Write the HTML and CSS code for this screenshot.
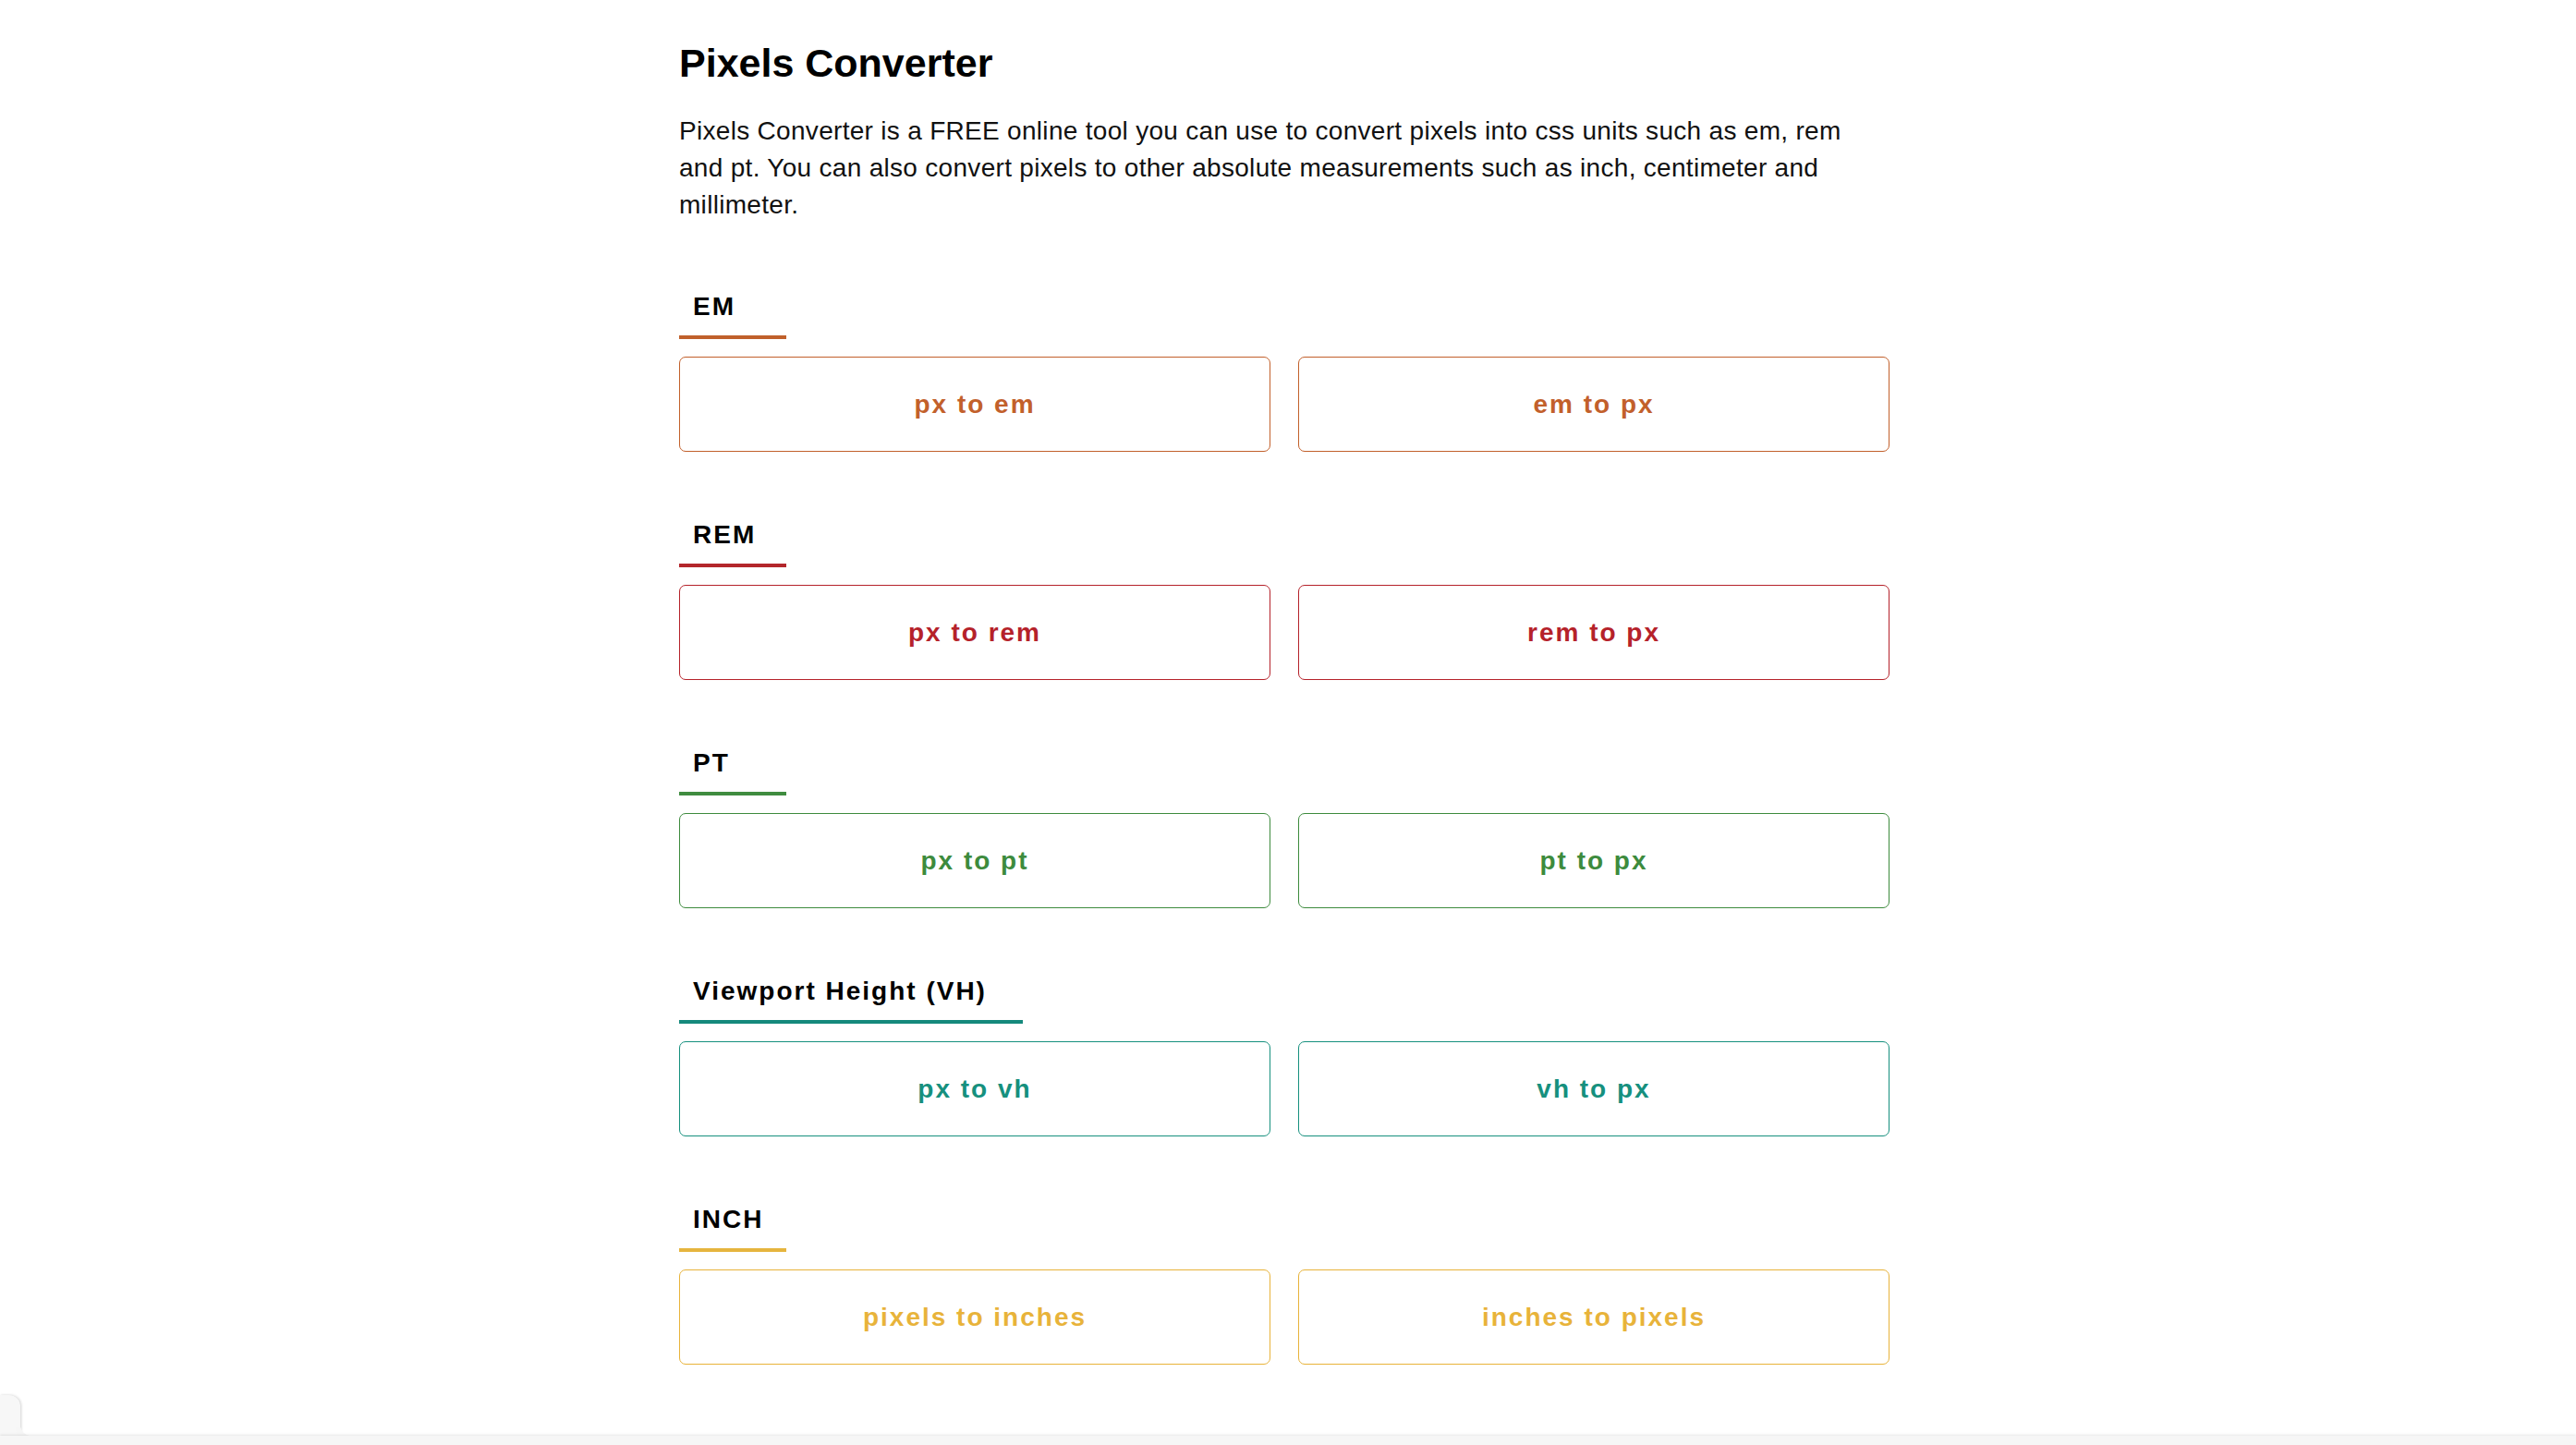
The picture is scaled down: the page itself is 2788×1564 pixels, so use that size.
FILE: index.html
```html
<!DOCTYPE html>
<html lang="en">
<head>
<meta charset="utf-8">
<title>Pixels Converter</title>
<link rel="stylesheet" href="styles.css">
</head>
<body>
<main class="container">
  <h1 class="title">Pixels Converter</h1>
  <p class="intro">Pixels Converter is a FREE online tool you can use to convert pixels into css units such as em, rem and pt. You can also convert pixels to other absolute measurements such as inch, centimeter and millimeter.</p>

  <section class="group group-em">
    <h2 class="group-title">EM</h2>
    <div class="links">
      <a class="link" href="#">px to em</a>
      <a class="link" href="#">em to px</a>
    </div>
  </section>

  <section class="group group-rem">
    <h2 class="group-title">REM</h2>
    <div class="links">
      <a class="link" href="#">px to rem</a>
      <a class="link" href="#">rem to px</a>
    </div>
  </section>

  <section class="group group-pt">
    <h2 class="group-title">PT</h2>
    <div class="links">
      <a class="link" href="#">px to pt</a>
      <a class="link" href="#">pt to px</a>
    </div>
  </section>

  <section class="group group-vh">
    <h2 class="group-title group-title-wide">Viewport Height (VH)</h2>
    <div class="links">
      <a class="link" href="#">px to vh</a>
      <a class="link" href="#">vh to px</a>
    </div>
  </section>

  <section class="group group-inch">
    <h2 class="group-title">INCH</h2>
    <div class="links">
      <a class="link" href="#">pixels to inches</a>
      <a class="link" href="#">inches to pixels</a>
    </div>
  </section>

  <section class="group group-cm">
    <h2 class="group-title">CM</h2>
    <div class="links">
      <a class="link" href="#">pixels to cm</a>
      <a class="link" href="#">cm to pixels</a>
    </div>
  </section>
</main>

<div class="dock">
  <div class="dock-tab"></div>
  <div class="dock-corner"></div>
  <div class="dock-bar"></div>
</div>
</body>
</html>
```

FILE: styles.css
```css
* {
  box-sizing: border-box;
}

html, body {
  margin: 0;
  padding: 0;
  background: #ffffff;
}

body {
  font-family: "Liberation Sans", Arial, Helvetica, sans-serif;
  color: #111111;
}

.container {
  width: 1318px;
  margin: 0 auto;
  padding-right: 8px;
  padding-bottom: 200px;
}

.title {
  margin: 44px 0 0;
  font-size: 43px;
  line-height: 48px;
  font-weight: 700;
  color: #000000;
}

.intro {
  margin: 30px 0 0;
  font-size: 28px;
  line-height: 40px;
  letter-spacing: 0.3px;
  color: #111111;
}

.group {
  margin-top: 70px;
}

.group-title {
  display: inline-block;
  min-width: 116px;
  margin: 0;
  padding: 0 16px 11px 15px;
  font-size: 28px;
  line-height: 40px;
  font-weight: 700;
  letter-spacing: 2px;
  color: #000000;
  border-bottom: 4px solid currentColor;
}

.group-title-wide {
  padding-right: 39px;
}

.links {
  display: grid;
  grid-template-columns: 1fr 1fr;
  gap: 30px;
  margin-top: 19px;
}

.link {
  display: flex;
  align-items: center;
  justify-content: center;
  height: 103px;
  border: 1.5px solid currentColor;
  border-radius: 7px;
  font-size: 28px;
  font-weight: 700;
  letter-spacing: 2px;
  text-decoration: none;
}

.group-em .group-title { border-bottom-color: #c0602b; }
.group-em .link { color: #c2602b; }

.group-rem .group-title { border-bottom-color: #b3262b; }
.group-rem .link { color: #b5222a; }

.group-pt .group-title { border-bottom-color: #3f8c3f; }
.group-pt .link { color: #3d8b3d; }

.group-vh .group-title { border-bottom-color: #15897c; }
.group-vh .link { color: #16907e; }

.group-inch .group-title { border-bottom-color: #e6b53e; }
.group-inch .link { color: #e8b33a; }

.group-cm .group-title { border-bottom-color: #7a4fb0; }
.group-cm .link { color: #7a4fb0; }

.dock {
  position: fixed;
  left: 0;
  right: 0;
  bottom: 0;
  height: 54px;
  z-index: 10;
  pointer-events: none;
}

.dock-tab {
  position: absolute;
  left: 0;
  top: 0;
  width: 22px;
  height: 54px;
  background: #f7f7f7;
  border-top-right-radius: 12px;
  box-shadow: 1px 0 3px rgba(0, 0, 0, 0.18);
}

.dock-bar {
  position: absolute;
  left: 0;
  right: 0;
  bottom: 0;
  height: 10px;
  background: #f6f6f6;
  box-shadow: 0 -1px 3px rgba(0, 0, 0, 0.1);
}

.dock-corner {
  position: absolute;
  left: 22px;
  bottom: 10px;
  width: 14px;
  height: 14px;
  background: transparent;
  border-bottom-left-radius: 12px;
  box-shadow: -5px 5px 0 0 #f6f6f6;
}
```
